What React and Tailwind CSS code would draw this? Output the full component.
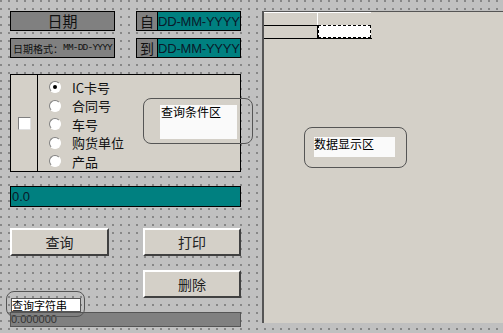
import React from "react";

const cjk = "font-['SimSun','Noto_Sans_CJK_SC',sans-serif]";

const Radio = ({ label, checked }) => (
  <div className="flex items-center h-[18.5px]">
    <span className="w-[12px] h-[12px] rounded-full bg-white border border-[#808080] border-b-white border-r-white flex items-center justify-center ml-[1px]">
      {checked && <span className="w-[4px] h-[4px] rounded-full bg-black" />}
    </span>
    <span className="ml-[11px] text-[13px] leading-none text-[#111]">{label}</span>
  </div>
);

const Button = ({ children, className = "" }) => (
  <div
    className={`h-[28px] bg-[#d4d0c8] border-t-2 border-l-2 border-t-white border-l-white border-b-2 border-r-2 border-b-[#404040] border-r-[#404040] flex items-center justify-center text-[14px] text-[#222] ${className}`}
  >
    {children}
  </div>
);

const DateField = ({ label }) => (
  <>
    <div className="ml-[21px] w-[21px] h-[20px] bg-[#808080] border border-black border-r-0 flex items-center justify-center text-[14px] text-[#111]">
      {label}
    </div>
    <div className="w-[84px] h-[20px] bg-[#008080] border border-black flex items-center overflow-hidden whitespace-nowrap font-['Liberation_Sans',sans-serif] text-[13px] tracking-[-0.2px] text-[#0a1a2a] leading-none">
      DD-MM-YYYY
    </div>
  </>
);

export default function App() {
  return (
    <div
      className={`w-[503px] h-[333px] overflow-hidden relative flex bg-[#c0c0c0] bg-[radial-gradient(circle_at_1px_1px,#4a4a4a_0.5px,transparent_0.9px)] bg-[length:8px_8px] ${cjk}`}
    >
      {/* left column */}
      <div className="w-[262px] shrink-0 pl-[10px] pt-[11px] relative">
        <div className="flex">
          <div className="w-[105px] h-[20px] bg-[#808080] border border-black flex items-center justify-center text-[15px] text-[#111]">
            日期
          </div>
          <DateField label="自" />
        </div>
        <div className="flex mt-[7px]">
          <div className="w-[105px] h-[20px] bg-[#808080] border border-black flex items-center pl-[2px] text-[10px] text-[#111] whitespace-nowrap">
            日期格式：<span className="font-['Liberation_Mono',monospace] text-[9.5px] tracking-[-0.8px]">MM-DD-YYYY</span>
          </div>
          <DateField label="到" />
        </div>

        {/* query group */}
        <div className="mt-[16px] w-[231px] h-[98px] bg-[#d4d0c8] border border-black flex">
          <div className="w-[27px] border-r border-black flex items-center justify-center">
            <span className="w-[13px] h-[13px] bg-white border border-[#808080] border-b-[#e0e0e0] border-r-[#e0e0e0]" />
          </div>
          <div className="pl-[10px] pt-[3px]">
            <Radio label="IC卡号" checked />
            <Radio label="合同号" />
            <Radio label="车号" />
            <Radio label="购货单位" />
            <Radio label="产品" />
          </div>
        </div>

        {/* overlay: query condition area */}
        <div className="absolute left-[143px] top-[98px] w-[110px] h-[46px] rounded-[8px] border border-[#555] flex items-start justify-end pr-[15px] pt-[6px]">
          <div className="w-[77px] h-[34px] bg-[#fafafa] text-[12px] leading-[14px] text-black pl-[1px]">
            查询条件区
          </div>
        </div>

        <div className="mt-[14px] w-[231px] h-[21px] bg-[#008080] border border-black flex items-center font-['Liberation_Sans',sans-serif] text-[13px] text-[#0a1a2a] pl-[1px]">
          0.0
        </div>

        <div className="mt-[21px] flex w-[231px] justify-between">
          <Button className="w-[99px]">查询</Button>
          <Button className="w-[98px]">打印</Button>
        </div>
        <div className="mt-[14px] flex w-[231px] justify-end">
          <Button className="w-[98px]">删除</Button>
        </div>

        <div className="mt-[14px] w-[231px] h-[15px] bg-[#808080] border border-[#555] font-['Liberation_Sans',sans-serif] text-[11px] leading-[13px] text-[#333]">
          0.000000
        </div>

        {/* overlay: query string */}
        <div className="absolute left-[6px] top-[291px] w-[79px] h-[26px] rounded-[8px] border border-[#555]">
          <div className="ml-[4px] mt-[6px] w-[70px] h-[14px] bg-white border border-[#555] text-[11px] leading-[12px] text-black">
            查询字符串
          </div>
        </div>
      </div>

      {/* data panel */}
      <div className="mt-[11px] h-[312px] flex-1 bg-[#d4d0c8] border-l-2 border-t border-[#555] relative">
        <div className="grid grid-cols-[54px_53px] w-[108px] border-b border-black">
          <div className="h-[13px] border-t border-white border-r border-black" />
          <div className="h-[13px] border-t border-white" />
          <div className="h-[13px] border-t border-[#808080] border-r border-black" />
          <div className="h-[13px] bg-white border border-dashed border-black" />
        </div>

        <div className="absolute left-[40px] top-[115px] w-[103px] h-[41px] rounded-[8px] border border-[#555] pl-[9px] pt-[9px]">
          <div className="w-[81px] h-[20px] bg-[#fafafa] text-[12px] leading-[14px] text-black">
            数据显示区
          </div>
        </div>
      </div>
    </div>
  );
}
